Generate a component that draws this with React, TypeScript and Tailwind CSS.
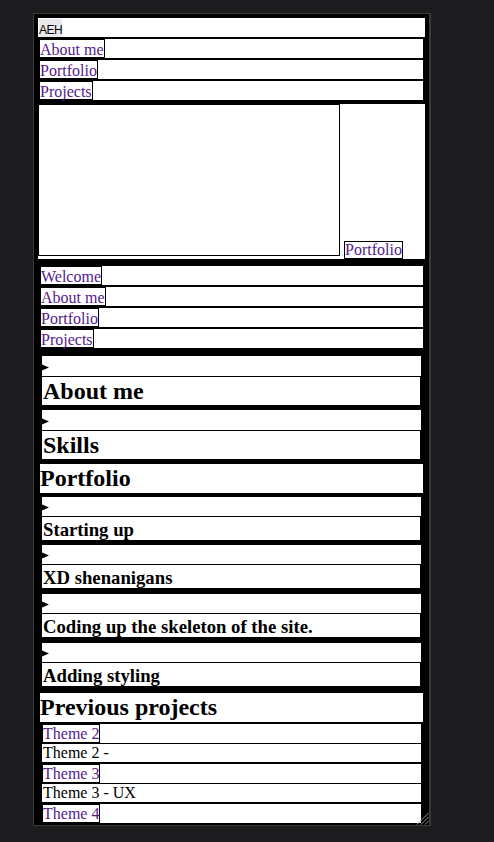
import React from "react";

const LINK =
  "block h-[19px] border border-black bg-white text-[16px] leading-[19px] text-[#551a8b] whitespace-nowrap";

function Tri({ top }: { top: string }) {
  return (
    <svg width="7" height="7" viewBox="0 0 7 7" className={top}>
      <polygon points="0,0.5 7,3.5 0,6.5" fill="#000" />
    </svg>
  );
}

function NavRow({ label, left, width }: { label: string; left: string; width: string }) {
  return (
    <div className={`flex h-[19px] bg-white ${left} ${width}`}>
      <a className={LINK}>{label}</a>
    </div>
  );
}

function BigDetails({ title, mt }: { title: string; mt: string }) {
  return (
    <div className={`ml-[8px] w-[379px] ${mt}`}>
      <div className="flex h-[21px] items-start border-b border-black bg-white">
        <Tri top="mt-[8px]" />
      </div>
      <div className="h-[28px] w-[378px] bg-white pl-[1px] text-[24px] font-bold leading-[28px] text-black whitespace-nowrap">
        {title}
      </div>
    </div>
  );
}

function SmallDetails({ title, mt }: { title: string; mt: string }) {
  return (
    <div className={`ml-[8px] w-[379px] ${mt}`}>
      <div className="flex h-[20px] items-start border-b border-black bg-white">
        <Tri top="mt-[7px]" />
      </div>
      <div className="h-[23px] w-[378px] overflow-hidden bg-white pl-[1px] text-[18.72px] font-bold leading-[25px] text-black whitespace-nowrap">
        {title}
      </div>
    </div>
  );
}

function ThemePair({ link, text, mt }: { link: string; text?: string; mt: string }) {
  return (
    <div className={`ml-[8px] w-[379px] ${mt}`}>
      <div className="flex h-[20px] border-b border-black bg-white">
        <a className="block h-[19px] border border-black bg-white text-[16px] leading-[18px] text-[#551a8b] whitespace-nowrap">
          {link}
        </a>
      </div>
      {text ? (
        <div className="h-[18px] bg-white pl-[1px] text-[16px] leading-[18px] text-black whitespace-nowrap">
          {text}
        </div>
      ) : null}
    </div>
  );
}

export default function App() {
  return (
    <div className="h-[842px] w-full overflow-hidden bg-[#1c1c1e] pl-[33px] pt-[13px] font-['Liberation_Serif',serif]">
      <div className="relative h-[813px] w-[398px] overflow-hidden border border-r-2 border-[#3a3a3a] bg-black">
        <div className="flex flex-col items-start">
          {/* header */}
          <div className="ml-[4px] mt-[4px] h-[19px] w-[387px] bg-white pl-[1px] pt-[1px]">
            <div className="h-[18px] w-[23px] bg-[#e9e9ed] pt-[2px] font-['Liberation_Sans',sans-serif] text-[12px] leading-[18px] tracking-[-0.5px] text-black">
              AEH
            </div>
          </div>

          {/* nav 1 */}
          <div className="mt-[2px] flex flex-col gap-[2px]">
            <NavRow label="About me" left="ml-[5px]" width="w-[384px]" />
            <NavRow label="Portfolio" left="ml-[5px]" width="w-[384px]" />
            <NavRow label="Projects" left="ml-[5px]" width="w-[384px]" />
          </div>

          {/* big box */}
          <div className="ml-[4px] mt-[4px] flex h-[155px] w-[387px] items-start bg-white">
            <div className="h-[152px] w-[302px] border border-black bg-white" />
            <a className="ml-[4px] mt-[137px] block h-[18px] border border-black bg-white text-[16px] leading-[16px] text-[#551a8b] whitespace-nowrap">
              Portfolio
            </a>
          </div>

          {/* nav 2 */}
          <div className="mt-[7px] flex flex-col gap-[2px]">
            <NavRow label="Welcome" left="ml-[6px]" width="w-[383px]" />
            <NavRow label="About me" left="ml-[6px]" width="w-[383px]" />
            <NavRow label="Portfolio" left="ml-[6px]" width="w-[383px]" />
            <NavRow label="Projects" left="ml-[6px]" width="w-[383px]" />
          </div>

          <BigDetails title="About me" mt="mt-[8px]" />
          <BigDetails title="Skills" mt="mt-[5px]" />

          <div className="ml-[6px] mt-[5px] h-[29px] w-[383px] bg-white text-[24px] font-bold leading-[29px] text-black">
            Portfolio
          </div>

          <SmallDetails title="Starting up" mt="mt-[4px]" />
          <SmallDetails title="XD shenanigans" mt="mt-[5px]" />
          <SmallDetails title="Coding up the skeleton of the site." mt="mt-[6px]" />
          <SmallDetails title="Adding styling" mt="mt-[6px]" />

          <div className="ml-[6px] mt-[7px] h-[29px] w-[383px] bg-white text-[24px] font-bold leading-[29px] text-black">
            Previous projects
          </div>

          <ThemePair link="Theme 2" text="Theme 2 -" mt="mt-[2px]" />
          <ThemePair link="Theme 3" text="Theme 3 - UX" mt="mt-[2px]" />
          <ThemePair link="Theme 4" mt="mt-[2px]" />
        </div>

        {/* resize handle */}
        <svg
          width="13"
          height="13"
          viewBox="0 0 13 13"
          className="absolute bottom-0 right-0"
        >
          <line x1="1" y1="12.5" x2="12.5" y2="1" stroke="#9a9a9a" strokeWidth="1" />
          <line x1="5" y1="12.5" x2="12.5" y2="5" stroke="#9a9a9a" strokeWidth="1" />
          <line x1="9" y1="12.5" x2="12.5" y2="9" stroke="#9a9a9a" strokeWidth="1" />
        </svg>
      </div>
    </div>
  );
}
